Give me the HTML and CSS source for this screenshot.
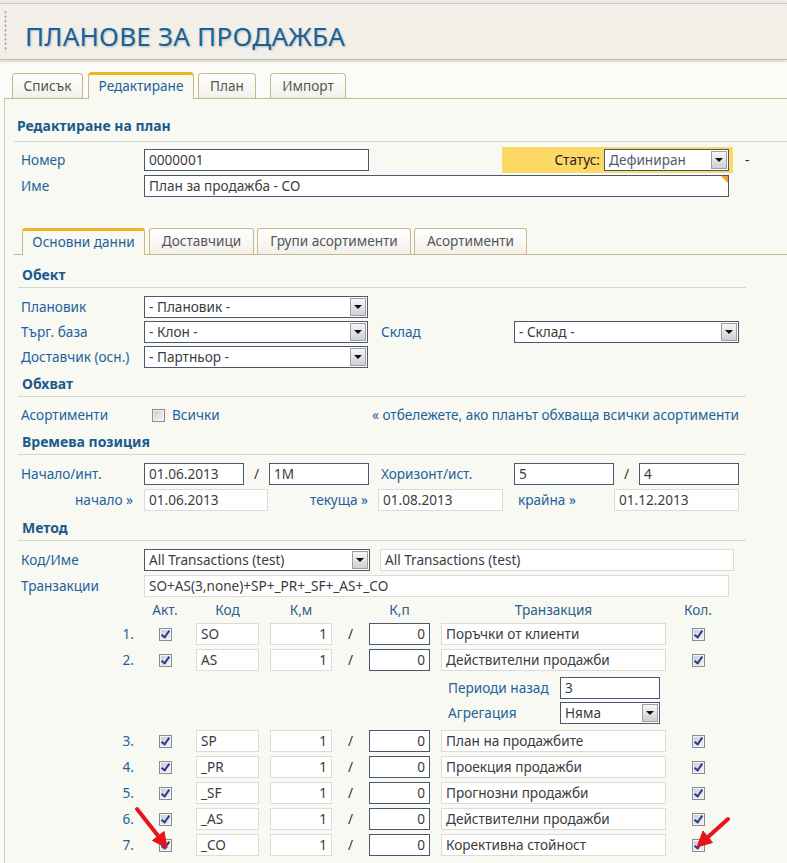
FILE: index.html
```html
<!DOCTYPE html>
<html lang="bg">
<head>
<meta charset="utf-8">
<title>Планове за продажба</title>
<link rel="stylesheet" href="styles.css">
</head>
<body>
<div class="topline"></div>
<header class="hdr">
  <div class="grip"></div>
  <h1 class="title">ПЛАНОВЕ ЗА ПРОДАЖБА</h1>
</header>
<nav class="tabs">
  <div class="tab tab-list">Списък</div>
  <div class="tab tab-edit active">Редактиране</div>
  <div class="tab tab-plan">План</div>
  <div class="tab tab-import">Импорт</div>
</nav>
<main class="panel">
  <h2 class="ptitle">Редактиране на план</h2>
  <div class="frow row-num">
    <span class="lbl">Номер</span>
    <div class="inp dark w-num">0000001</div>
    <div class="status">
      <span class="status-lbl">Статус:</span>
      <div class="sel w-status"><span class="sel-txt sel-soft">Дефиниран</span><span class="arr"></span></div>
    </div>
    <span class="dash">-</span>
  </div>
  <div class="frow row-name">
    <span class="lbl">Име</span>
    <div class="inp dark w-name req">План за продажба - СО</div>
  </div>

  <div class="subtabs">
    <div class="stab active st1">Основни данни</div>
    <div class="stab st2">Доставчици</div>
    <div class="stab st3">Групи асортименти</div>
    <div class="stab st4">Асортименти</div>
  </div>

  <h3 class="sh sh-obj">Обект</h3>
  <div class="frow r-first">
    <span class="lbl">Плановик</span>
    <div class="sel w-sel"><span class="sel-txt">- Плановик -</span><span class="arr"></span></div>
  </div>
  <div class="frow r-next">
    <span class="lbl">Търг. база</span>
    <div class="sel w-sel"><span class="sel-txt">- Клон -</span><span class="arr"></span></div>
    <span class="lbl2 lbl2-wh">Склад</span>
    <div class="sel w-sel2"><span class="sel-txt">- Склад -</span><span class="arr"></span></div>
  </div>
  <div class="frow r-next">
    <span class="lbl">Доставчик (осн.)</span>
    <div class="sel w-sel"><span class="sel-txt">- Партньор -</span><span class="arr"></span></div>
  </div>

  <h3 class="sh">Обхват</h3>
  <div class="frow r-scope">
    <span class="lbl">Асортименти</span>
    <span class="cb"></span>
    <span class="cb-lbl">Всички</span>
    <span class="hint">« отбележете, ако планът обхваща всички асортименти</span>
  </div>

  <h3 class="sh">Времева позиция</h3>
  <div class="frow r-first">
    <span class="lbl">Начало/инт.</span>
    <div class="inp dark w100">01.06.2013</div>
    <span class="slash">/</span>
    <div class="inp dark w100">1M</div>
    <span class="lbl2">Хоризонт/ист.</span>
    <div class="inp dark w100">5</div>
    <span class="slash">/</span>
    <div class="inp dark w100">4</div>
  </div>
  <div class="frow r-dates">
    <span class="lbl lbl-r">начало »</span>
    <div class="inp ro w124">01.06.2013</div>
    <span class="lnk lnk-cur">текуща »</span>
    <div class="inp ro w125">01.08.2013</div>
    <span class="lnk lnk-end">крайна »</span>
    <div class="inp ro w125">01.12.2013</div>
  </div>

  <h3 class="sh sh-method">Метод</h3>
  <div class="frow r-first">
    <span class="lbl">Код/Име</span>
    <div class="sel w-code"><span class="sel-txt">All Transactions (test)</span><span class="arr"></span></div>
    <div class="inp ro w-codename">All Transactions (test)</div>
  </div>
  <div class="frow r-dates">
    <span class="lbl">Транзакции</span>
    <div class="inp ro w-trans">SO+AS(3,none)+SP+_PR+_SF+_AS+_CO</div>
  </div>

  <div class="trow thead">
    <span></span>
    <span class="th">Акт.</span>
    <span class="th">Код</span>
    <span></span>
    <span class="th">К,м</span>
    <span></span>
    <span class="th">К,п</span>
    <span></span>
    <span class="th">Транзакция</span>
    <span class="th">Кол.</span>
  </div>

  <div class="trow tr-first">
    <span class="num">1.</span>
    <span class="cbcell"><span class="cb on"></span></span>
    <div class="inp ro">SO</div><span></span>
    <div class="inp ro rt">1</div>
    <span class="slash">/</span>
    <div class="inp dark rt">0</div><span></span>
    <div class="inp ro">Поръчки от клиенти</div>
    <span class="cbcell"><span class="cb on"></span></span>
  </div>
  <div class="trow">
    <span class="num">2.</span>
    <span class="cbcell"><span class="cb on"></span></span>
    <div class="inp ro">AS</div><span></span>
    <div class="inp ro rt">1</div>
    <span class="slash">/</span>
    <div class="inp dark rt">0</div><span></span>
    <div class="inp ro">Действителни продажби</div>
    <span class="cbcell"><span class="cb on"></span></span>
  </div>

  <div class="frow r-sub r-sub1">
    <span class="lbl3">Периоди назад</span>
    <div class="inp dark w100">3</div>
  </div>
  <div class="frow r-sub r-sub2">
    <span class="lbl3">Агрегация</span>
    <div class="sel w100"><span class="sel-txt">Няма</span><span class="arr"></span></div>
  </div>

  <div class="trow tr-after">
    <span class="num">3.</span>
    <span class="cbcell"><span class="cb on"></span></span>
    <div class="inp ro">SP</div><span></span>
    <div class="inp ro rt">1</div>
    <span class="slash">/</span>
    <div class="inp dark rt">0</div><span></span>
    <div class="inp ro">План на продажбите</div>
    <span class="cbcell"><span class="cb on"></span></span>
  </div>
  <div class="trow">
    <span class="num">4.</span>
    <span class="cbcell"><span class="cb on"></span></span>
    <div class="inp ro">_PR</div><span></span>
    <div class="inp ro rt">1</div>
    <span class="slash">/</span>
    <div class="inp dark rt">0</div><span></span>
    <div class="inp ro">Проекция продажби</div>
    <span class="cbcell"><span class="cb on"></span></span>
  </div>
  <div class="trow">
    <span class="num">5.</span>
    <span class="cbcell"><span class="cb on"></span></span>
    <div class="inp ro">_SF</div><span></span>
    <div class="inp ro rt">1</div>
    <span class="slash">/</span>
    <div class="inp dark rt">0</div><span></span>
    <div class="inp ro">Прогнозни продажби</div>
    <span class="cbcell"><span class="cb on"></span></span>
  </div>
  <div class="trow">
    <span class="num">6.</span>
    <span class="cbcell"><span class="cb on"></span></span>
    <div class="inp ro">_AS</div><span></span>
    <div class="inp ro rt">1</div>
    <span class="slash">/</span>
    <div class="inp dark rt">0</div><span></span>
    <div class="inp ro">Действителни продажби</div>
    <span class="cbcell"><span class="cb on"></span></span>
  </div>
  <div class="trow">
    <span class="num">7.</span>
    <span class="cbcell"><span class="cb on"></span></span>
    <div class="inp ro">_CO</div><span></span>
    <div class="inp ro rt">1</div>
    <span class="slash">/</span>
    <div class="inp dark rt">0</div><span></span>
    <div class="inp ro">Корективна стойност</div>
    <span class="cbcell"><span class="cb on"></span></span>
  </div>
</main>

<svg class="arrows" width="787" height="863" viewBox="0 0 787 863" aria-hidden="true">
  <g fill="#e8141c" stroke="#e8141c">
    <line x1="137" y1="809" x2="159" y2="837" stroke-width="4" stroke-linecap="round"/>
    <polygon points="167,848 152.5,840.5 164,831.5" stroke-width="1" stroke-linejoin="round"/>
    <line x1="728" y1="819" x2="708" y2="837" stroke-width="4" stroke-linecap="round"/>
    <polygon points="697,847 712.5,842.5 703,831" stroke-width="1" stroke-linejoin="round"/>
  </g>
</svg>
</body>
</html>
```

FILE: styles.css
```css
* { box-sizing: border-box; margin: 0; padding: 0; }

html, body { background: #fbfbf8; }

body {
  width: 787px;
  height: 863px;
  overflow: hidden;
  position: relative;
  font-family: "Noto Sans", "DejaVu Sans", sans-serif;
  font-size: 13.6px;
  line-height: 16px;
  color: #3a3a3a;
}

/* ---------- header ---------- */
.topline {
  height: 4px;
  background: #ececec;
  border-bottom: 1px solid #cfcfcf;
}

.hdr {
  height: 56px;
  background: #f1efe7;
  border-bottom: 1px solid #c6bea6;
  box-shadow: 0 1px 3px rgba(140, 130, 100, 0.45);
  display: flex;
  align-items: flex-start;
}

.grip {
  width: 3px;
  height: 42px;
  margin: 6px 0 0 4px;
  background-image: radial-gradient(circle, #a9a9a9 0.9px, transparent 1.2px);
  background-size: 3px 4.5px;
}

.title {
  margin: 17px 0 0 18px;
  font-size: 26px;
  line-height: 30px;
  font-weight: normal;
  color: #15639d;
  text-shadow: 1px 1px 2px rgba(0, 0, 0, 0.22);
  letter-spacing: 0.25px;
}

/* ---------- main tabs ---------- */
.tabs {
  display: flex;
  align-items: flex-end;
  height: 26px;
  margin-top: 12px;
}

.tab {
  height: 25px;
  border: 1px solid #c8b78c;
  border-bottom: none;
  border-radius: 4px 4px 0 0;
  background: linear-gradient(#ffffff, #f1f0e9);
  color: #555;
  text-align: center;
  line-height: 23px;
}

.tab.active {
  height: 27px;
  margin-bottom: -1px;
  border-top: 3px solid #f4b324;
  background: #f9f9f4;
  color: #1d5f96;
  position: relative;
  z-index: 1;
  line-height: 22px;
}

.tab-list { margin-left: 12px; width: 71px; }
.tab-edit { margin-left: 5px; width: 106px; }
.tab-plan { margin-left: 4px; width: 58px; }
.tab-import { margin-left: 14px; width: 76px; }

/* ---------- panel ---------- */
.panel {
  margin-left: 4px;
  height: 765px;
  border-left: 1px solid #cfc7ad;
  border-top: 1px solid #c8b78c;
  background: #f9f9f4;
}

.ptitle {
  margin-left: 9px;
  padding: 19px 0 7px 3px;
  font-size: 14px;
  line-height: 16px;
  font-weight: bold;
  color: #1b5b8c;
  border-bottom: 1px solid #d8d8d2;
}

.frow {
  display: flex;
  align-items: center;
  height: 22px;
  padding-left: 16px;
}

.lbl {
  width: 123px;
  flex: none;
  color: #22629b;
  white-space: nowrap;
}

.lbl2 {
  width: 133px;
  margin-left: 12px;
  flex: none;
  color: #22629b;
}
.lbl2-wh { margin-left: 13px; }

.lbl3 {
  width: 112px;
  flex: none;
  color: #22629b;
}

.row-num { margin-top: 5px; height: 26px; }
.row-name { margin-top: 2px; }

.inp {
  height: 22px;
  flex: none;
  padding: 0 4px;
  line-height: 20px;
  background: #fff;
  border: 1px solid #dcdcd6;
  color: #3c3c3c;
  white-space: nowrap;
  overflow: hidden;
}
.inp.dark { border-color: #475870; }
.inp.ro { border-color: #dcdcd6; }
.inp.rt { text-align: right; }

.req { position: relative; }
.req::after {
  content: "";
  position: absolute;
  top: 0;
  right: 0;
  border-top: 7px solid #f3a12a;
  border-left: 7px solid transparent;
}

.w-num { width: 225px; }
.w-name { width: 585px; }
.w100 { width: 100px; }
.w124 { width: 124px; }
.w125 { width: 125px; }
.w-sel { width: 224px; }
.w-sel2 { width: 225px; }
.w-status { width: 125px; height: 21px; }
.w-code { width: 226px; }
.w-codename { width: 354px; margin-left: 10px; }
.w-trans { width: 585px; }

.sel {
  display: flex;
  align-items: stretch;
  flex: none;
  height: 22px;
  background: #fff;
  border: 1px solid #475870;
  color: #3c3c3c;
}
.sel-txt {
  flex: 1;
  padding-left: 4px;
  line-height: 20px;
  white-space: nowrap;
  overflow: hidden;
}
.sel-soft { color: #4f5a74; }
.arr {
  width: 16px;
  margin: 1px;
  flex: none;
  background: linear-gradient(#f7f7f7, #cfcfcf);
  border: 1px solid #9e9e9e;
  display: flex;
  align-items: center;
  justify-content: center;
}
.arr::after {
  content: "";
  border-left: 4px solid transparent;
  border-right: 4px solid transparent;
  border-top: 4px solid #111;
}

.status {
  display: flex;
  align-items: center;
  justify-content: flex-end;
  width: 231px;
  height: 26px;
  margin-left: 133px;
  padding-right: 4px;
  background: #fed865;
}
.status-lbl { margin-right: 4px; color: #222; }

.dash { margin-left: 12px; color: #222; }

/* ---------- sub tabs ---------- */
.subtabs {
  display: flex;
  align-items: flex-end;
  height: 27px;
  margin: 31px 0 0 9px;
  padding-left: 8px;
  border-bottom: 1px solid #c8b78c;
}

.stab {
  height: 26px;
  border: 1px solid #c8b78c;
  border-bottom: none;
  border-radius: 3px 3px 0 0;
  background: linear-gradient(#ffffff, #f1f0e9);
  color: #555;
  text-align: center;
  line-height: 24px;
  margin-right: 3px;
}
.stab.active {
  height: 27px;
  margin-bottom: -1px;
  border-top: 3px solid #f4b324;
  background: #f9f9f4;
  color: #1d5f96;
  line-height: 22px;
  margin-right: 4px;
}
.st1 { width: 123px; }
.st2 { width: 105px; }
.st3 { width: 154px; }
.st4 { width: 113px; }

/* ---------- sections ---------- */
.sh {
  margin: 8px 0 0 13px;
  width: 728px;
  padding: 0 0 4px 4px;
  font-size: 14px;
  line-height: 16px;
  font-weight: bold;
  color: #1b5b8c;
  border-bottom: 1px solid #d8d8d2;
}
.sh-obj { margin-top: 12px; }
.sh-method { margin-top: 9px; }

.r-first { margin-top: 8px; }
.r-next { margin-top: 3px; }
.r-dates { margin-top: 4px; }

.r-scope { margin-top: 7px; width: 734px; }

.cb {
  width: 13px;
  height: 13px;
  flex: none;
  border: 1px solid #8c8c8c;
  background: linear-gradient(135deg, #c9ccd1, #f8f8f8);
  box-shadow: inset 0 0 0 1px #f2f2f2;
  position: relative;
  display: inline-block;
}
.r-scope .cb { margin-left: 8px; }
.cb-lbl { margin-left: 7px; color: #22629b; }
.hint { margin-left: auto; color: #22629b; white-space: nowrap; }

.cb.on {
  background: linear-gradient(135deg, #c4cad6, #f4f6fa);
}
.cb.on::after {
  content: "";
  position: absolute;
  left: 3px;
  top: 0px;
  width: 3px;
  height: 7px;
  border: solid #2a3b8e;
  border-width: 0 2px 2px 0;
  transform: rotate(35deg);
}

.slash {
  width: 25px;
  flex: none;
  text-align: center;
  color: #333;
}

.lbl-r { text-align: right; padding-right: 11px; }
.lnk { flex: none; color: #22629b; }
.lnk-cur { width: 110px; text-align: right; padding-right: 10px; }
.lnk-end { width: 111px; padding-left: 15px; }

/* ---------- transactions table ---------- */
.trow {
  display: grid;
  grid-template-columns: 129px 62px 63px 11px 62px 37px 61px 11px 225px 64px;
  align-items: center;
  height: 22px;
  margin-top: 4px;
}
.trow .inp { width: auto; }
.trow .slash { width: auto; }

.thead { height: 16px; margin-top: 5px; }
.th { text-align: center; color: #2b5f8f; }
.tr-first { margin-top: 5px; }
.tr-after { margin-top: 6px; }

.num { text-align: right; color: #22629b; }
.cbcell { display: flex; justify-content: center; }

.r-sub { padding-left: 443px; }
.r-sub1 { margin-top: 6px; }
.r-sub2 { margin-top: 3px; }

/* ---------- annotation arrows ---------- */
.arrows {
  position: absolute;
  left: 0;
  top: 0;
  pointer-events: none;
}
```
